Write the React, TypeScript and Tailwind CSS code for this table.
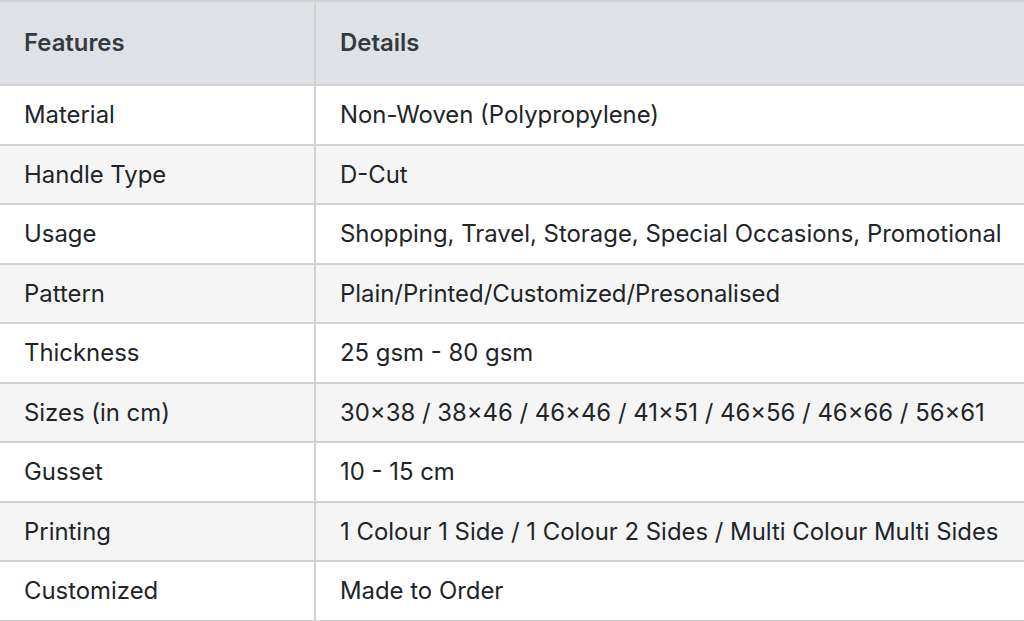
const rows = [
  ["Material", "Non-Woven (Polypropylene)"],
  ["Handle Type", "D-Cut"],
  ["Usage", "Shopping, Travel, Storage, Special Occasions, Promotional"],
  ["Pattern", "Plain/Printed/Customized/Presonalised"],
  ["Thickness", "25 gsm - 80 gsm"],
  ["Sizes (in cm)", "30×38 / 38×46 / 46×46 / 41×51 / 46×56 / 46×66 / 56×61"],
  ["Gusset", "10 - 15 cm"],
  ["Printing", "1 Colour 1 Side / 1 Colour 2 Sides / Multi Colour Multi Sides"],
  ["Customized", "Made to Order"],
];

export default function App() {
  return (
    <div className="w-[1024px] h-[621px] overflow-hidden bg-white font-['Inter',sans-serif]">
      <table className="w-[1040px] border-collapse text-[23.9px] leading-[29px] text-[#212529]">
        <thead>
          <tr className="bg-[#dee2e6]">
            <th className="w-[315px] border-2 border-[#d2d2d2] border-l-0 pl-[24px] pr-[25px] pt-[26px] pb-[27px] text-left font-semibold text-[#343a40]">
              Features
            </th>
            <th className="border-2 border-[#d2d2d2] pl-[24px] pr-[25px] pt-[26px] pb-[27px] text-left font-semibold text-[#343a40]">
              Details
            </th>
          </tr>
        </thead>
        <tbody>
          {rows.map(([k, v], i) => (
            <tr key={k} className={i % 2 === 1 ? "bg-[#f5f5f5]" : "bg-white"}>
              <td className="border-2 border-[#d2d2d2] border-l-0 pl-[24px] pr-[25px] py-[14.25px]">{k}</td>
              <td className="border-2 border-[#d2d2d2] pl-[24px] pr-[25px] py-[14.25px] whitespace-nowrap">{v}</td>
            </tr>
          ))}
        </tbody>
      </table>
    </div>
  );
}
